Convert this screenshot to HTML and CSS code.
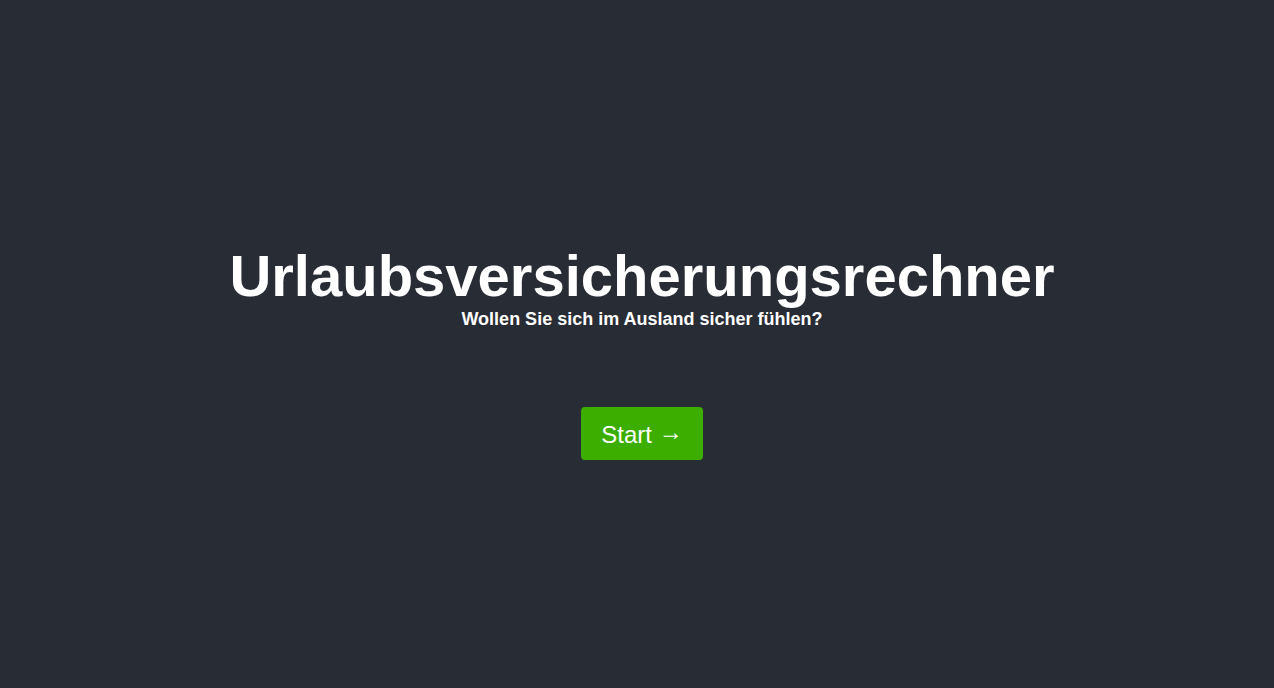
FILE: index.html
```html
<!DOCTYPE html>
<html lang="de">
<head>
<meta charset="utf-8">
<title>Urlaubsversicherungsrechner</title>
<link rel="stylesheet" href="styles.css">
</head>
<body>
<main class="app">
  <header class="intro">
    <h1 class="title">Urlaubsversicherungsrechner</h1>
    <p class="subtitle">Wollen Sie sich im Ausland sicher fühlen?</p>
  </header>
  <button class="start" type="button">Start <span class="arrow">→</span></button>
</main>
</body>
</html>
```

FILE: styles.css
```css
html, body {
  margin: 0;
  padding: 0;
  background: #282c34;
}
.app {
  min-height: 688px;
  box-sizing: border-box;
  display: flex;
  flex-direction: column;
  align-items: center;
  justify-content: center;
  padding-top: 14px;
  padding-left: 10px;
  color: #ffffff;
  font-family: "Liberation Sans", Arial, sans-serif;
}
.intro {
  display: flex;
  flex-direction: column;
  align-items: center;
}
.title {
  margin: 0;
  font-size: 58px;
  font-weight: 700;
  line-height: 67px;
}
.subtitle {
  margin: 0;
  font-size: 18px;
  font-weight: 700;
  line-height: 21px;
}
.start {
  margin-top: 77px;
  width: 122px;
  height: 53px;
  padding: 0;
  border: none;
  border-radius: 4px;
  background: #3cae00;
  color: #ffffff;
  font-family: "Liberation Sans", Arial, sans-serif;
  font-size: 24px;
  cursor: pointer;
}
.arrow {
  vertical-align: 3px;
}
```
